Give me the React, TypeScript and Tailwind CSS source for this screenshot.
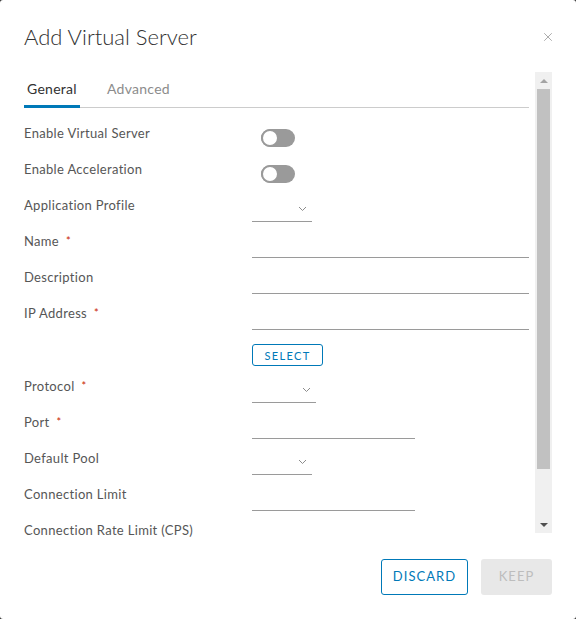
import { X } from "lucide-react";

type Field =
  | { label: string; req?: boolean; kind: "toggle" }
  | { label: string; req?: boolean; kind: "select"; w: string }
  | { label: string; req?: boolean; kind: "input"; w: string }
  | { label: string; req?: boolean; kind: "button" };

const fields: Field[] = [
  { label: "Enable Virtual Server", kind: "toggle" },
  { label: "Enable Acceleration", kind: "toggle" },
  { label: "Application Profile", kind: "select", w: "w-[60px]" },
  { label: "Name", req: true, kind: "input", w: "w-[277px]" },
  { label: "Description", kind: "input", w: "w-[277px]" },
  { label: "IP Address", req: true, kind: "input", w: "w-[277px]" },
  { label: "", kind: "button" },
  { label: "Protocol", req: true, kind: "select", w: "w-[64px]" },
  { label: "Port", req: true, kind: "input", w: "w-[163px]" },
  { label: "Default Pool", kind: "select", w: "w-[60px]" },
  { label: "Connection Limit", kind: "input", w: "w-[163px]" },
  { label: "Connection Rate Limit (CPS)", kind: "input", w: "w-[163px]" },
];

function Chevron() {
  return (
    <svg width="9" height="6" viewBox="0 0 9 6" className="mr-[5px]">
      <path d="M1 1l3.5 3.5L8 1" fill="none" stroke="#8c8c8c" strokeWidth="1" />
    </svg>
  );
}

function Control({ f }: { f: Field }) {
  if (f.kind === "toggle") {
    return (
      <div className="ml-[9px] mt-[5px] w-[34px] h-[18px] rounded-full bg-[#9a9a9a] flex items-center">
        <span className="w-[18px] h-[18px] rounded-full bg-white border-2 border-[#9a9a9a]" />
      </div>
    );
  }
  if (f.kind === "select") {
    return (
      <div className={`${f.w} h-[26px] border-b border-[#9a9a9a] flex items-center justify-end`}>
        <Chevron />
      </div>
    );
  }
  if (f.kind === "input") {
    return <div className={`${f.w} h-[26px] border-b border-[#9a9a9a]`} />;
  }
  return (
    <button className="mt-[4px] h-[22px] w-[71px] rounded-[3px] border border-[#0079b8] text-[#0079b8] text-[11px] tracking-[0.12em] leading-none">
      SELECT
    </button>
  );
}

export default function App() {
  return (
    <div
      className="w-[576px] h-[619px] bg-[#313131]"
      style={{ fontFamily: "Lato, 'Open Sans', sans-serif" }}
    >
      <div className="h-full bg-white rounded-[3px] flex flex-col pt-[22px] px-[24px] pb-[24px]">
        {/* header */}
        <div className="h-[30px] flex items-center justify-between">
          <h1 className="text-[22px] font-light text-[#313131] leading-[30px]">Add Virtual Server</h1>
          <X size={14} strokeWidth={1.25} className="text-[#8c8c8c] mr-[-3px]" />
        </div>

        {/* body */}
        <div className="mt-[20px] flex items-start">
          <div className="flex-1 h-[468px] overflow-hidden pr-[6px]">
            <div className="h-[36px] flex gap-[27px] shadow-[inset_0_-1px_0_#cccccc] text-[14px] tracking-[0.02em]">
              <div className="h-[36px] px-[3px] flex items-center border-b-[3px] border-[#0079b8] text-[#313131]">
                General
              </div>
              <div className="h-[36px] pb-[3px] flex items-center text-[#8c8c8c]">Advanced</div>
            </div>

            <div className="pt-[16px]">
              {fields.map((f, i) => (
                <div key={i} className={`flex ${f.kind === "button" ? "h-[37px]" : "h-[36px]"}`}>
                  <div className="w-[228px] shrink-0 text-[13px] leading-[18px] tracking-[0.025em] text-[#565656]">
                    {f.label}
                    {f.req && <span className="ml-[7px] text-[#c92100] text-[11px] align-top">*</span>}
                  </div>
                  <Control f={f} />
                </div>
              ))}
            </div>
          </div>

          {/* scrollbar */}
          <div className="w-[17px] h-[461px] bg-[#f0f0f0] flex flex-col items-center">
            <div className="h-[17px] w-full flex items-center justify-center">
              <span className="w-0 h-0 border-x-[4px] border-x-transparent border-b-[4px] border-b-[#a3a3a3]" />
            </div>
            <div className="w-[13px] h-[380px] bg-[#c1c1c1]" />
            <div className="flex-1" />
            <div className="h-[17px] w-full flex items-center justify-center">
              <span className="w-0 h-0 border-x-[4px] border-x-transparent border-t-[4px] border-t-[#505050]" />
            </div>
          </div>
        </div>

        {/* footer */}
        <div className="mt-auto flex justify-end gap-[13px]">
          <button className="h-[36px] w-[87px] rounded-[3px] border border-[#0079b8] text-[#0079b8] text-[13px] tracking-[0.08em]">
            DISCARD
          </button>
          <button className="h-[36px] w-[71px] rounded-[3px] bg-[#e8e8e8] text-[#bdbdbd] text-[13px] tracking-[0.08em]">
            KEEP
          </button>
        </div>
      </div>
    </div>
  );
}
